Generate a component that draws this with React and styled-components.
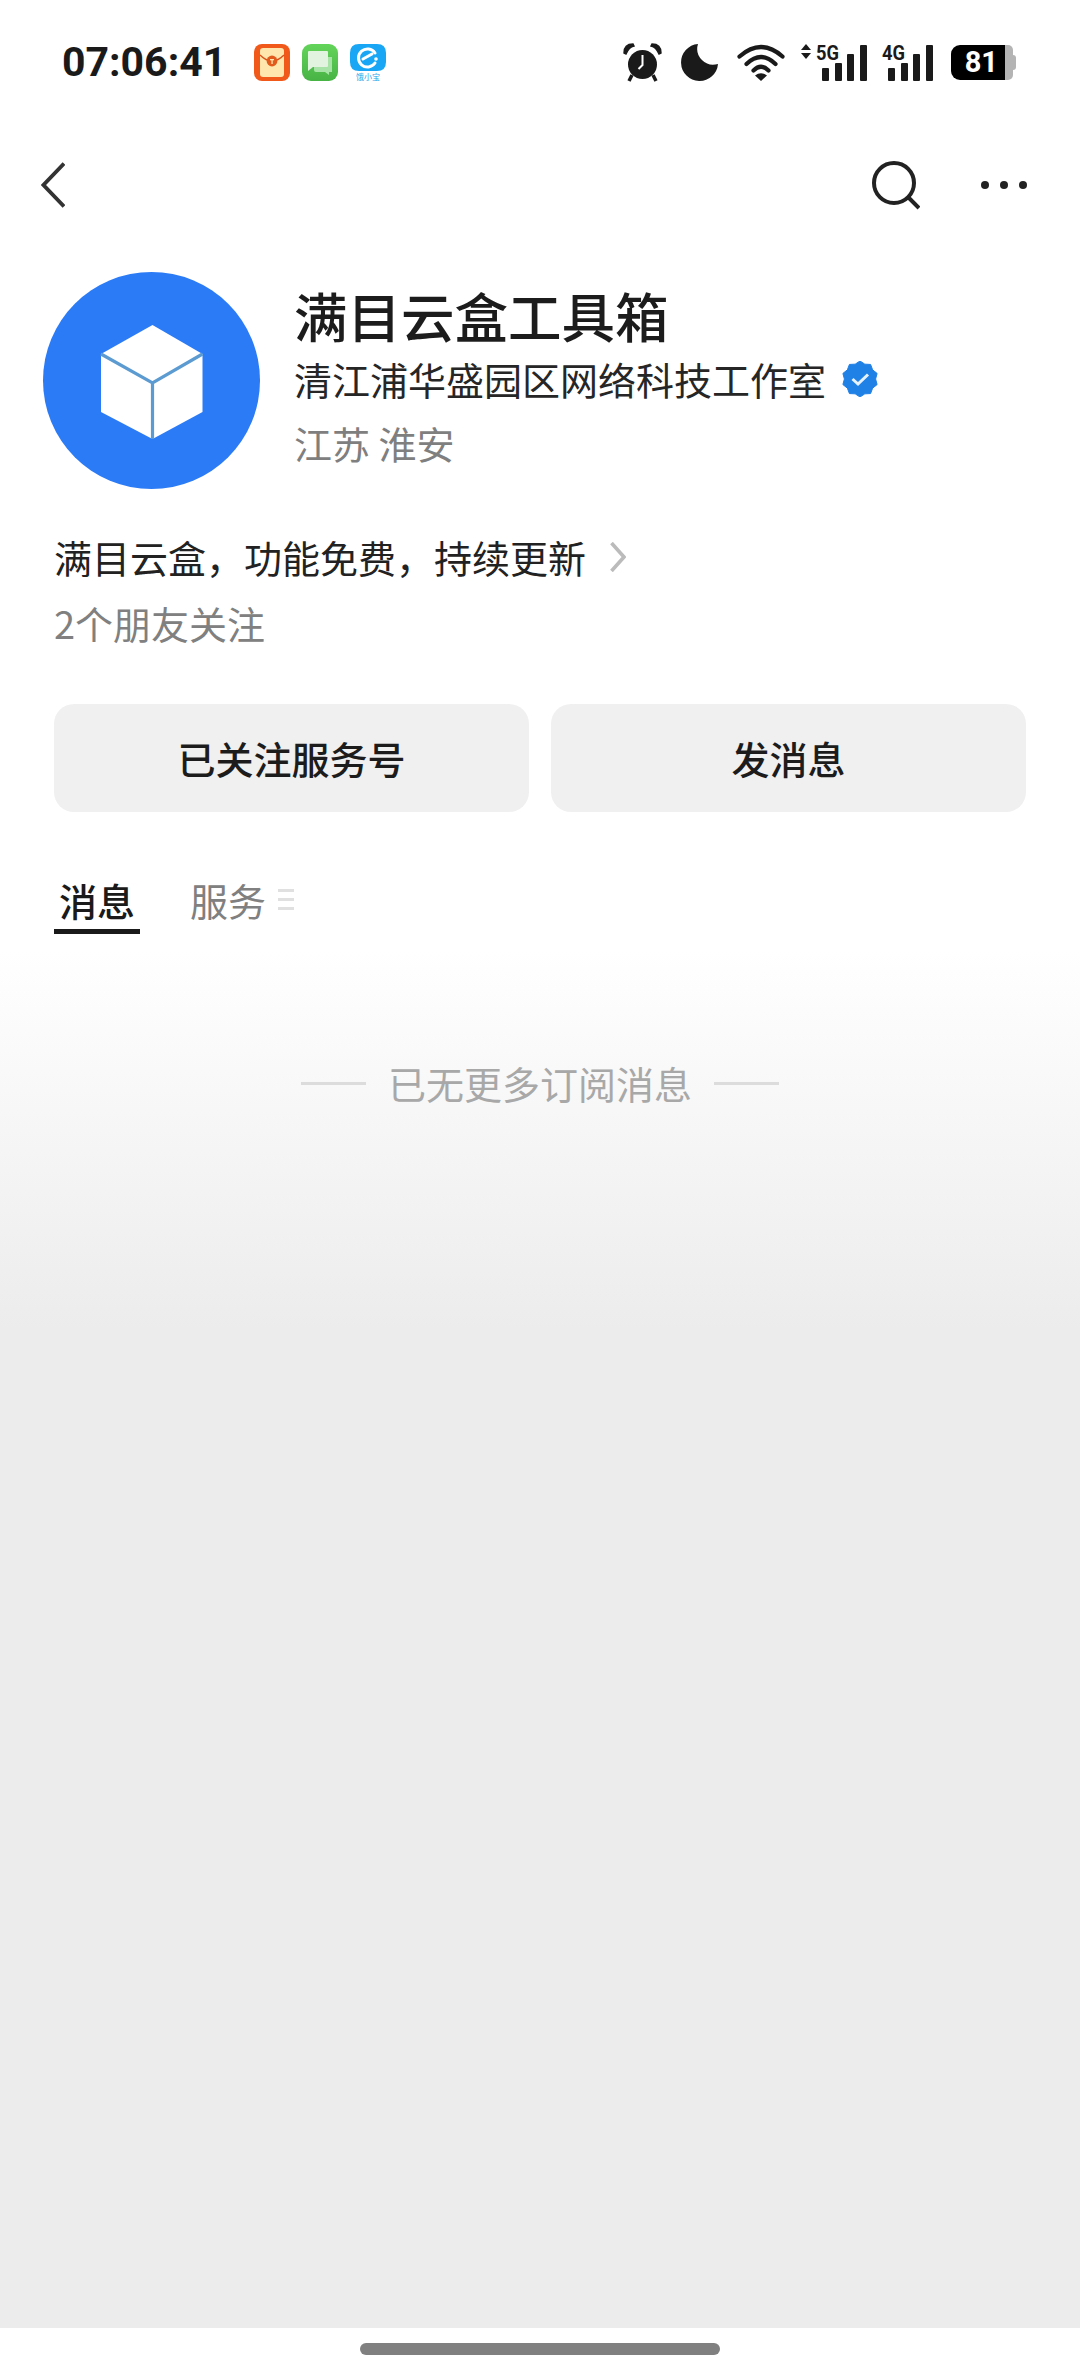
import React from 'react';
import styled, { createGlobalStyle } from 'styled-components';

const cjk = '"Noto Sans CJK SC", "Noto Sans", sans-serif';

const GlobalStyle = createGlobalStyle`
  html, body {
    margin: 0;
    padding: 0;
    background: #fff;
  }
  body {
    font-family: ${cjk};
    color: #1a1a1a;
  }
`;

const Page = styled.div`
  width: 1080px;
  height: 2376px;
  display: flex;
  flex-direction: column;
  overflow: hidden;
  background: #fff;
`;

const StatusBar = styled.div`
  height: 124px;
  flex: none;
  display: flex;
  align-items: center;
  padding: 0 67px 0 62px;
  box-sizing: border-box;
`;

const Clock = styled.div`
  font-family: Roboto, "Liberation Sans", sans-serif;
  font-size: 41px;
  font-weight: 700;
  color: #1a1a1a;
  width: 192px;
  flex: none;
`;

const AppIcons = styled.div`
  display: flex;
  gap: 12px;
  svg { display: block; }
`;

const StatusIcons = styled.div`
  margin-left: auto;
  display: flex;
  align-items: center;
  svg { display: block; flex: none; }
`;

const Battery = styled.div`
  display: flex;
  position: relative;
  height: 35px;
  width: 62px;
  margin-left: 17px;

  &::after {
    content: '';
    position: absolute;
    right: -3px;
    top: 10px;
    width: 3px;
    height: 15px;
    border-radius: 0 3px 3px 0;
    background: #b4b4b4;
  }
`;

const BatteryFill = styled.div`
  width: 54px;
  background: #000;
  color: #fff;
  border-radius: 9px 0 0 9px;
  font-family: Roboto, "Liberation Sans", sans-serif;
  font-size: 29px;
  font-weight: 700;
  line-height: 35px;
  text-align: right;
  padding-right: 7px;
  box-sizing: border-box;
`;

const BatteryRest = styled.div`
  width: 8px;
  background: #b4b4b4;
  border-radius: 0 5px 5px 0;
`;

const NavBar = styled.div`
  height: 116px;
  flex: none;
  display: flex;
  align-items: center;
  padding: 6px 53px 0 41px;
  box-sizing: border-box;
  svg { display: block; }
`;

const NavRight = styled.div`
  margin-left: auto;
  display: flex;
  align-items: center;
  gap: 61px;
`;

const Profile = styled.div`
  display: flex;
  flex: none;
  gap: 34px;
  margin-top: 32px;
  padding-left: 43px;
`;

const Avatar = styled.div`
  width: 217px;
  height: 217px;
  border-radius: 50%;
  background: #2b7bf6;
  flex: none;
  display: flex;
  svg { display: block; }
`;

const Info = styled.div`
  display: flex;
  flex-direction: column;
  padding-top: 11px;
`;

const Title = styled.div`
  font-size: 53.5px;
  line-height: 64px;
  font-weight: 500;
  color: #1c1c1c;
`;

const SubRow = styled.div`
  display: flex;
  align-items: center;
  gap: 16px;
  height: 64px;
`;

const Line = styled.div`
  font-size: 38px;
  line-height: ${p => p.$height || 60}px;
  font-weight: ${p => p.$weight || 400};
  color: ${p => p.$color || '#222'};
`;

const Details = styled.div`
  flex: none;
  margin-top: 38px;
  padding: 0 54px;
  display: flex;
  flex-direction: column;
  gap: 6px;
`;

const DescRow = styled.div`
  display: flex;
  align-items: center;
  gap: 24px;
  svg { display: block; }
`;

const Actions = styled.div`
  flex: none;
  display: flex;
  gap: 22px;
  margin-top: 51px;
  padding: 0 54px;
`;

const ActionButton = styled.div`
  flex: 1;
  height: 108px;
  padding-bottom: 2px;
  box-sizing: border-box;
  border-radius: 20px;
  background: #f0f0f0;
  display: flex;
  align-items: center;
  justify-content: center;
  font-size: 38px;
  font-weight: 500;
  color: #1c1c1c;
`;

const Tabs = styled.div`
  flex: none;
  display: flex;
  align-items: flex-start;
  gap: 45px;
  margin-top: 60px;
  padding-left: 54px;
`;

const Tab = styled.div`
  display: flex;
  align-items: center;
  gap: 12px;
  padding: 0 5px 2px;
  font-size: 38px;
  line-height: 55px;
  font-weight: ${p => (p.$active ? 500 : 400)};
  color: ${p => (p.$active ? '#1a1a1a' : '#808080')};
  border-bottom: 5px solid ${p => (p.$active ? '#1a1a1a' : 'transparent')};
`;

const Feed = styled.div`
  flex: 1;
  min-height: 0;
  padding-top: 124px;
  box-sizing: border-box;
  background: linear-gradient(#fff 16px, #ececec 396px);
  display: flex;
  justify-content: center;
  align-items: flex-start;
  gap: 22px;
`;

const EndText = styled.div`
  font-size: 38px;
  line-height: 50px;
  color: #a8a8a8;
`;

const EndRule = styled.div`
  width: 65px;
  height: 3px;
  margin-top: 24px;
  background: #dcdcdc;
`;

const HomeArea = styled.div`
  height: 48px;
  flex: none;
  background: #fff;
  display: flex;
  justify-content: center;
  padding-top: 15px;
  box-sizing: border-box;
`;

const HomeBar = styled.div`
  width: 360px;
  height: 12px;
  border-radius: 6px;
  background: #808080;
`;

const RedPacketIcon = () => (
  <svg width="36" height="37" viewBox="0 0 36 37">
    <rect width="36" height="37" rx="8" fill="#f0591a" />
    <rect x="6" y="4" width="24" height="29" rx="3" fill="#ffe6ad" />
    <path d="M6 11 Q18 23 30 11" fill="none" stroke="#d9531c" strokeWidth="1.4" />
    <circle cx="18" cy="17" r="5.4" fill="#e25a1c" />
    <rect x="16" y="15" width="4" height="1.3" fill="#ffe6ad" />
    <rect x="17.4" y="15" width="1.3" height="5" fill="#ffe6ad" />
  </svg>
);

const ChatIcon = () => (
  <svg width="36" height="37" viewBox="0 0 36 37">
    <defs>
      <linearGradient id="chatBg" x1="0" y1="0" x2="0" y2="1">
        <stop offset="0" stopColor="#63d45a" />
        <stop offset="1" stopColor="#47b345" />
      </linearGradient>
    </defs>
    <rect width="36" height="37" rx="9" fill="url(#chatBg)" />
    <path d="M12 13 H30 V28 H27 V31 L23 28 H14 Q12 28 12 26 Z" fill="#a7e3a6" />
    <path d="M6 8 Q6 7 7 7 H25 Q26 7 26 8 V22 Q26 23 25 23 H11 L6 27 Z" fill="#e2f3df" />
  </svg>
);

const ElemeIcon = () => (
  <svg width="36" height="37" viewBox="0 0 36 37">
    <path d="M9 0 H27 Q36 0 36 9 V18 Q36 27 27 27 H9 Q0 27 0 18 V9 Q0 0 9 0 Z" fill="#19a6f5" />
    <path d="M25 9 A9 9 0 1 0 25 19" fill="none" stroke="#fff" strokeWidth="3" strokeLinecap="round" />
    <path d="M13 15 L22 10" stroke="#fff" strokeWidth="3" strokeLinecap="round" />
    <circle cx="26" cy="15" r="1.8" fill="#fff" />
    <text x="18" y="36" textAnchor="middle" fontSize="8" fill="#2aa5e6" fontFamily={cjk}>饿小宝</text>
  </svg>
);

const AlarmIcon = () => (
  <svg width="39" height="39" viewBox="0 0 39 39">
    <circle cx="19.5" cy="21.5" r="14.5" fill="#1a1a1a" />
    <path d="M1 10 Q1 1 10 1 L11 3 Q6 4 3 11 Z" fill="#1a1a1a" stroke="#1a1a1a" strokeWidth="1.4" />
    <path d="M38 10 Q38 1 29 1 L28 3 Q33 4 36 11 Z" fill="#1a1a1a" stroke="#1a1a1a" strokeWidth="1.4" />
    <path d="M9 32 L6 38 M30 32 L33 38" stroke="#1a1a1a" strokeWidth="3.5" />
    <path d="M19.5 12 V22 L15.5 26" fill="none" stroke="#fff" strokeWidth="2" />
  </svg>
);

const MoonIcon = () => (
  <svg width="37" height="37" viewBox="0 0 37 37" style={{ marginLeft: 19 }}>
    <path d="M17 0 A18.5 18.5 0 1 0 37 20 A16 16 0 0 1 17 0 Z" fill="#1a1a1a" />
  </svg>
);

const WifiIcon = () => (
  <svg width="48" height="37" viewBox="0 0 48 37" style={{ marginLeft: 19 }}>
    <g fill="none" stroke="#1a1a1a" strokeWidth="4.2" strokeLinecap="round">
      <path d="M2.5 12.5 Q24 -6.5 45.5 12.5" />
      <path d="M9.5 20 Q24 6 38.5 20" />
      <path d="M16.5 26.5 Q24 19 31.5 26.5" />
    </g>
    <path d="M24 37 L18 31.5 Q24 27 30 31.5 Z" fill="#1a1a1a" />
  </svg>
);

const SignalIcon = ({ label, arrows }) => (
  <svg
    width={arrows ? 66 : 52}
    height="45"
    viewBox={`${arrows ? -15 : 0} -6 ${arrows ? 66 : 52} 45`}
    style={{ marginLeft: arrows ? 16 : 15, marginTop: -6 }}
  >
    {arrows && (
      <g fill="#1a1a1a">
        <path d="M-15 7 L-10 1 L-5 7 Z" />
        <path d="M-15 10 L-10 16 L-5 10 Z" />
      </g>
    )}
    <text
      x="0"
      y="16.5"
      fontFamily="Roboto, sans-serif"
      fontWeight="700"
      fontSize="21"
      fill="#1a1a1a"
      textLength="23"
      lengthAdjust="spacingAndGlyphs"
    >
      {label}
    </text>
    <g fill="#1a1a1a">
      <rect x="6" y="25" width="7" height="13" rx="1" />
      <rect x="19" y="20" width="7" height="18" rx="1" />
      <rect x="31" y="11" width="7" height="27" rx="1" />
      <rect x="44" y="2" width="7" height="36" rx="1" />
    </g>
  </svg>
);

const BackIcon = () => (
  <svg width="24" height="46" viewBox="0 0 24 46">
    <path d="M23 1.5 L2.5 23 L23 44.5" fill="none" stroke="#333" strokeWidth="3.8" />
  </svg>
);

const SearchIcon = () => (
  <svg width="48" height="49" viewBox="0 0 48 49">
    <circle cx="22" cy="22" r="20" fill="none" stroke="#222" strokeWidth="4" />
    <path d="M36 36 L47 47" stroke="#222" strokeWidth="4" />
  </svg>
);

const MoreIcon = () => (
  <svg width="46" height="8" viewBox="0 0 46 8">
    <circle cx="4" cy="4" r="4" fill="#222" />
    <circle cx="23" cy="4" r="4" fill="#222" />
    <circle cx="42" cy="4" r="4" fill="#222" />
  </svg>
);

const CubeLogo = () => (
  <svg width="217" height="217" viewBox="0 0 217 217">
    <path d="M109.5 53 L159.5 82 V140 L109.5 167 L58 140 V82 Z" fill="#fff" />
    <path
      d="M58 82 L109.5 111 L159.5 82 M109.5 111 V167"
      fill="none"
      stroke="#5c9bd1"
      strokeWidth="3.2"
    />
  </svg>
);

const VerifiedBadge = () => {
  const points = [];
  const teeth = 10;
  for (let i = 0; i < teeth * 2; i++) {
    const r = i % 2 ? 15.6 : 18;
    const a = (Math.PI * i) / teeth;
    points.push(`${(18 + r * Math.sin(a)).toFixed(2)},${(18 - r * Math.cos(a)).toFixed(2)}`);
  }
  return (
    <svg width="36" height="36" viewBox="0 0 36 36">
      <polygon points={points.join(' ')} fill="#1f80e6" stroke="#1f80e6" strokeWidth="1" strokeLinejoin="round" />
      <path d="M10.5 18 L16 23 L26 13.5" fill="none" stroke="#e6f2fd" strokeWidth="3" />
    </svg>
  );
};

const ChevronRight = () => (
  <svg width="16" height="30" viewBox="0 0 16 30">
    <path d="M1.5 1 L14 15 L1.5 29" fill="none" stroke="#bbb" strokeWidth="3.6" />
  </svg>
);

const MenuGlyph = () => (
  <svg width="16" height="21" viewBox="0 0 16 21">
    <g fill="#e0e0e0">
      <rect y="0" width="16" height="3" />
      <rect y="9" width="16" height="3" />
      <rect y="18" width="16" height="3" />
    </g>
  </svg>
);

export default function App() {
  return (
    <Page>
      <GlobalStyle />

      <StatusBar>
        <Clock>07:06:41</Clock>
        <AppIcons>
          <RedPacketIcon />
          <ChatIcon />
          <ElemeIcon />
        </AppIcons>
        <StatusIcons>
          <AlarmIcon />
          <MoonIcon />
          <WifiIcon />
          <SignalIcon label="5G" arrows />
          <SignalIcon label="4G" />
          <Battery>
            <BatteryFill>81</BatteryFill>
            <BatteryRest />
          </Battery>
        </StatusIcons>
      </StatusBar>

      <NavBar>
        <BackIcon />
        <NavRight>
          <SearchIcon />
          <MoreIcon />
        </NavRight>
      </NavBar>

      <Profile>
        <Avatar>
          <CubeLogo />
        </Avatar>
        <Info>
          <Title>满目云盒工具箱</Title>
          <SubRow>
            <Line $height={64} $color="#262626">清江浦华盛园区网络科技工作室</Line>
            <VerifiedBadge />
          </SubRow>
          <Line $height={63} $color="#7f7f7f">江苏 淮安</Line>
        </Info>
      </Profile>

      <Details>
        <DescRow>
          <Line>满目云盒，功能免费，持续更新</Line>
          <ChevronRight />
        </DescRow>
        <Line $color="#808080">2个朋友关注</Line>
      </Details>

      <Actions>
        <ActionButton>已关注服务号</ActionButton>
        <ActionButton>发消息</ActionButton>
      </Actions>

      <Tabs>
        <Tab $active>消息</Tab>
        <Tab>
          服务
          <MenuGlyph />
        </Tab>
      </Tabs>

      <Feed>
        <EndRule />
        <EndText>已无更多订阅消息</EndText>
        <EndRule />
      </Feed>

      <HomeArea>
        <HomeBar />
      </HomeArea>
    </Page>
  );
}
